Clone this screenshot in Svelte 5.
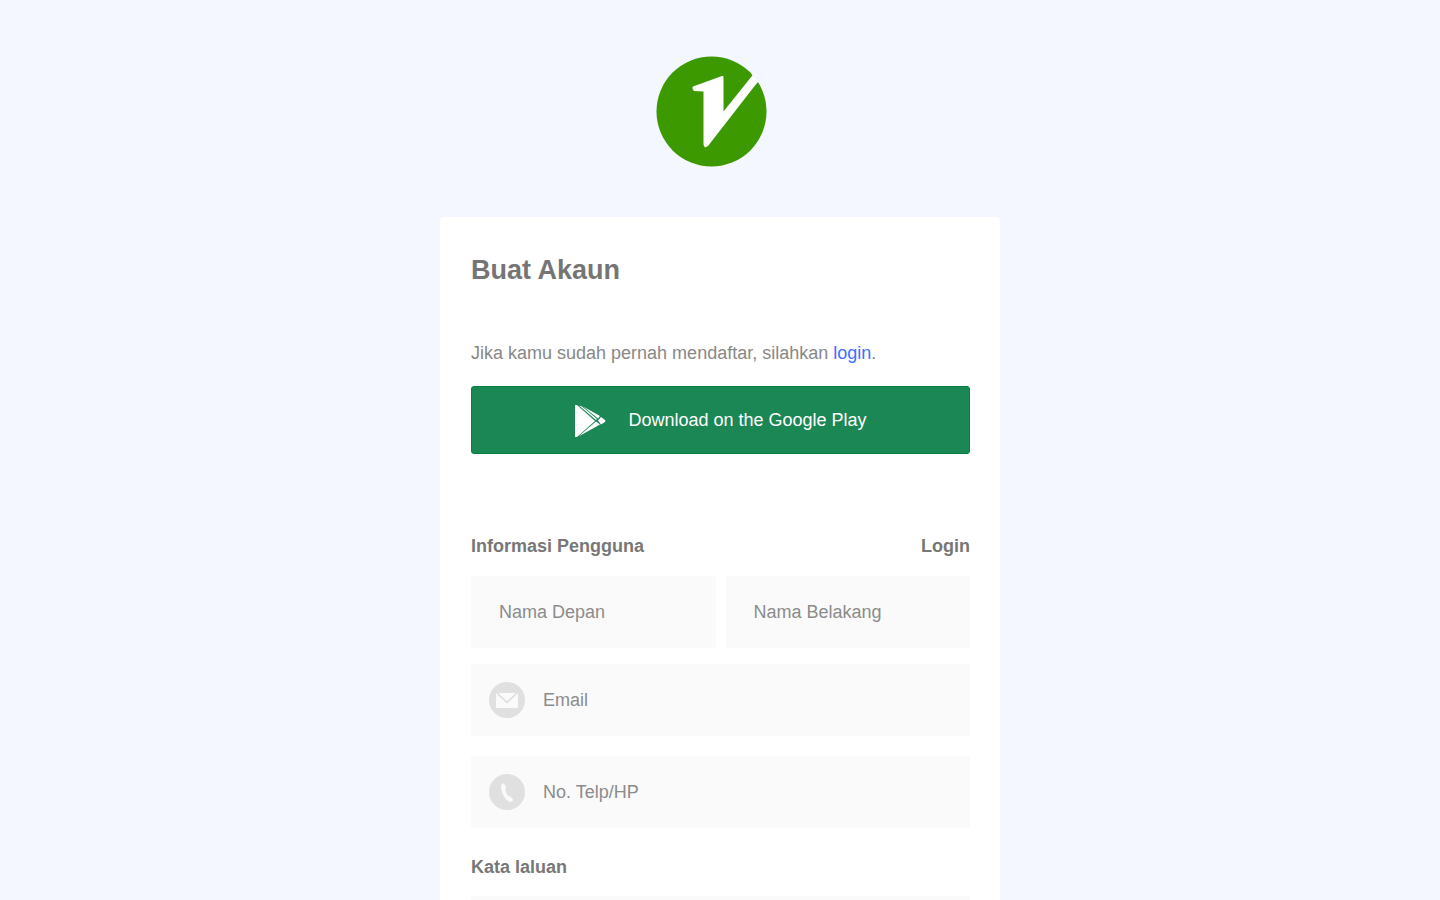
<script>
  let namaDepan = $state('');
  let namaBelakang = $state('');
  let email = $state('');
  let telp = $state('');
  let password = $state('');

  const submit = (e) => {
    e.preventDefault();
  };
</script>

<main>
  <!-- logo -->
  <svg class="logo" viewBox="0 0 128 112" role="img" aria-label="Logo">
    <circle cx="55.5" cy="55.5" r="55" fill="#3c9a00" />
    <path
      fill="#fff"
      d="M37 30.5 L66 20 Q67.500 19.500 67.500 21 V55.500 L95.5 20.5 L101 15.5 L106 21.5 L99 29.5 L52 90 Q48 93 47.5 88 V35.500 L38 35 Q35.500 32 37 30.500 Z"
    />
    <path fill="#f4f7ff" d="M95.5 18.5 L104 12 L109 24 L102.5 26 Z" />
  </svg>

  <form class="card" onsubmit={submit}>
    <h1>Buat Akaun</h1>

    <p class="intro">Jika kamu sudah pernah mendaftar, silahkan <a href="#login">login</a>.</p>

    <button type="button" class="download">
      <svg class="play" viewBox="0 0 32 34" aria-hidden="true">
        <path fill="#fff" d="M1 2 L3 2 L21 18 L3 34 L1 34 Z" />
        <path fill="#fff" d="M5 2.500 L8 3.500 L23 16 L22 17 Z" />
        <path fill="#fff" d="M9 3.500 L26 13 L24 15.500 Z" />
        <path fill="#fff" d="M5 33 L22 18.500 L26 21.500 L9 31 Z" />
        <path fill="#fff" d="M24 17.500 L27 14 L31 17 Q32 18 31 19 L27 21.500 Z" />
      </svg>
      <span>Download on the Google Play</span>
    </button>

    <div class="heading">
      <h2>Informasi Pengguna</h2>
      <a href="#login">Login</a>
    </div>

    <div class="names">
      <input type="text" placeholder="Nama Depan" aria-label="Nama Depan" bind:value={namaDepan} />
      <input type="text" placeholder="Nama Belakang" aria-label="Nama Belakang" bind:value={namaBelakang} />
    </div>

    <label class="field email">
      <svg viewBox="0 0 36 36" aria-hidden="true">
        <circle cx="18" cy="18" r="18" fill="#e0e0e0" />
        <rect x="7" y="11" width="22" height="15" rx="1" fill="#fafafa" />
        <path d="M8 11 L18 20.500 L28 11" fill="none" stroke="#dcdcdc" stroke-width="1.500" />
      </svg>
      <input type="email" placeholder="Email" aria-label="Email" bind:value={email} />
    </label>

    <label class="field phone">
      <svg viewBox="0 0 36 36" aria-hidden="true">
        <circle cx="18" cy="18" r="18" fill="#e0e0e0" />
        <path
          d="M12.500 10.500 Q14.500 8.500 16 11 L17 14 Q17 15.500 16 16 Q17 20 20 22.500 Q21 22 22 23 L24 25.500 Q24.500 28 22 28 Q18.500 28 15 22.500 Q11 15 12.500 10.500 Z"
          fill="#fafafa"
        />
      </svg>
      <input type="tel" placeholder="No. Telp/HP" aria-label="No. Telp/HP" bind:value={telp} />
    </label>

    <h2 class="password-title" id="kata-laluan">Kata laluan</h2>
    <div class="field">
      <input type="password" aria-labelledby="kata-laluan" bind:value={password} />
    </div>
  </form>
</main>

<style>
  :global(body) {
    margin: 0;
    background: #f4f7ff;
  }

  main {
    display: flex;
    flex-direction: column;
    align-items: center;
    padding: 56px 16px 0;
    font-family: "Liberation Sans", Arial, sans-serif;
    font-size: 18px;
    line-height: 24px;
    color: #777;
  }

  .logo {
    width: 128px;
    height: 112px;
  }

  .card {
    box-sizing: border-box;
    width: 100%;
    max-width: 560px;
    margin-top: 49px;
    padding: 37px 30px 32px 31px;
    background: #fff;
    border-radius: 4px;
  }

  h1 {
    margin: 0;
    font-size: 27px;
    line-height: 32px;
    color: #757575;
  }

  h2 {
    margin: 0;
    font-size: 18px;
    line-height: 24px;
  }

  .intro {
    margin: 55px 0 0;
    color: #888;
  }

  .intro a {
    color: #3b71fe;
    text-decoration: none;
  }

  .download {
    display: flex;
    align-items: center;
    justify-content: center;
    gap: 22px;
    width: 100%;
    height: 68px;
    margin-top: 21px;
    padding: 0;
    border: 1px solid #04803f;
    border-radius: 3px;
    background: #1b8755;
    color: #fff;
    font: inherit;
    cursor: pointer;
  }

  .play {
    width: 32px;
    height: 34px;
  }

  .heading {
    display: flex;
    justify-content: space-between;
    margin-top: 80px;
  }

  .heading a {
    color: inherit;
    font-weight: bold;
    text-decoration: none;
  }

  .names {
    display: flex;
    gap: 10px;
    margin-top: 18px;
  }

  input {
    box-sizing: border-box;
    flex: 1;
    min-width: 0;
    height: 72px;
    padding: 0 28px;
    border: none;
    background: #fafafa;
    color: #666;
    font: inherit;
  }

  input::placeholder {
    color: #8c8c8c;
    opacity: 1;
  }

  .field {
    display: flex;
    align-items: center;
    background: #fafafa;
  }

  .field svg {
    width: 36px;
    height: 36px;
    margin-left: 18px;
  }

  .field input {
    padding: 0 18px;
    background: transparent;
  }

  .email {
    margin-top: 16px;
  }

  .phone {
    margin-top: 20px;
  }

  .password-title {
    margin: 27px 0 17px;
  }
</style>
